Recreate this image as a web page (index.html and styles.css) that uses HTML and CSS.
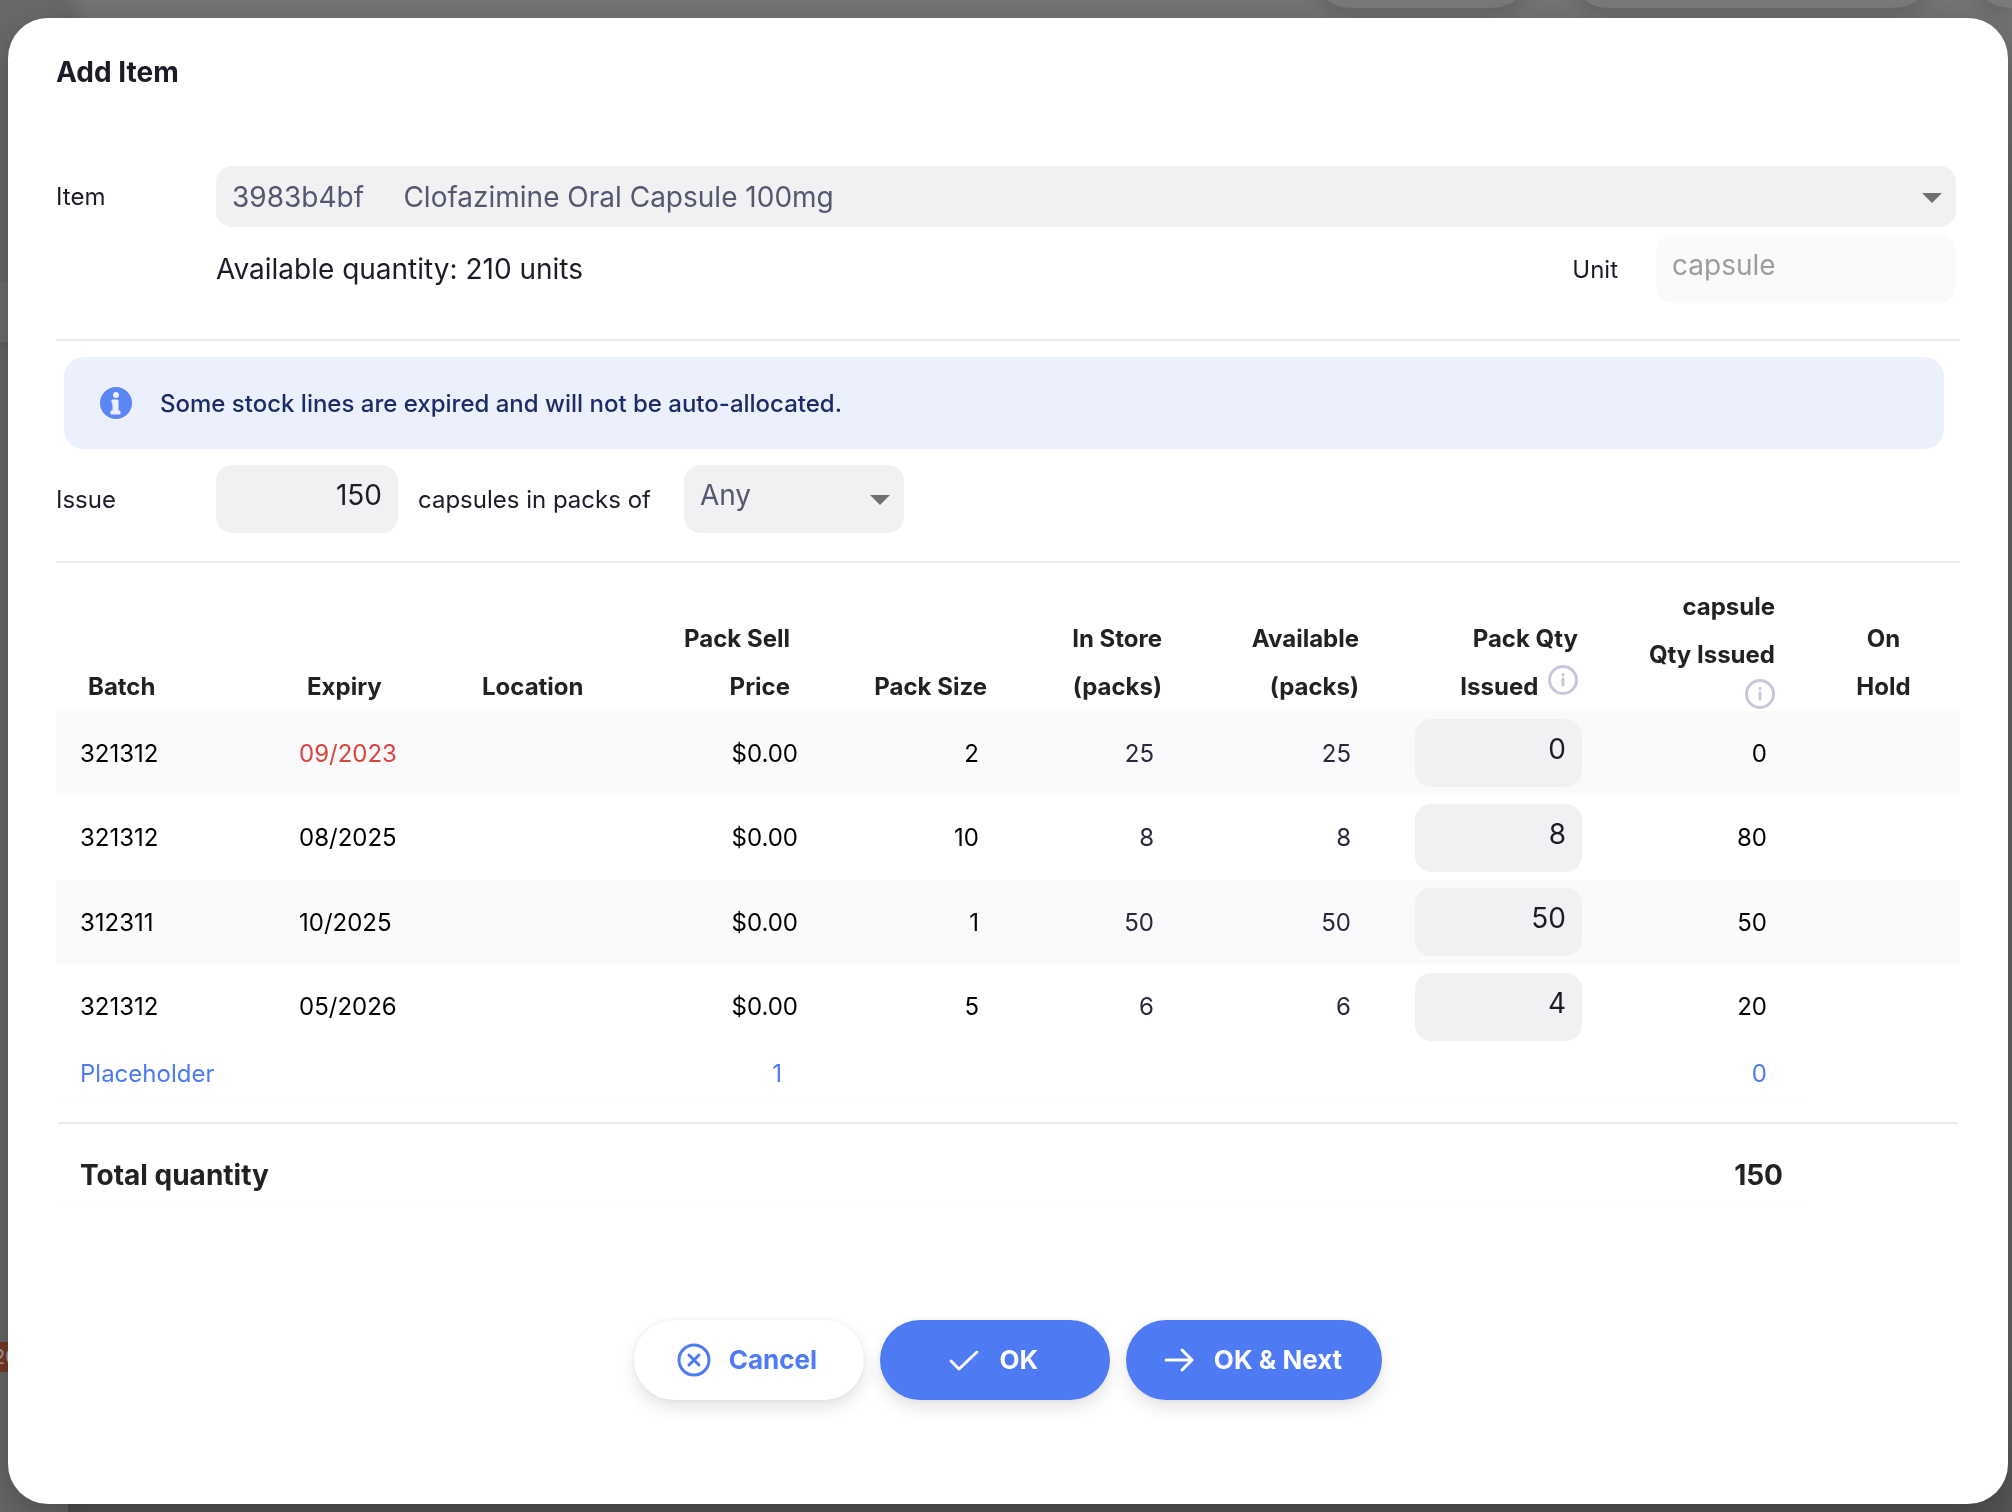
FILE: index.html
```
<!DOCTYPE html>
<html lang="en">
<head>
    <meta charset="UTF-8">
    <meta name="viewport" content="width=device-width, initial-scale=1.0">
    <title>Add Item</title>
    <link rel="stylesheet" href="styles.css">
</head>
<body>
    <!-- Dimmed page behind the dialog -->
    <div class="page" aria-hidden="true">
        <div class="page-sidebar">
            <div class="page-nav"></div>
            <div class="page-badge">20</div>
        </div>
        <div class="page-toolbar">
            <span class="page-pill"></span>
            <span class="page-pill wide"></span>
            <span class="page-pill last"></span>
        </div>
    </div>

    <div class="overlay">
        <form class="modal" role="dialog" aria-labelledby="modal-title">
            <h1 class="modal-title" id="modal-title">Add Item</h1>

            <div class="row">
                <label class="row-label" for="item">Item</label>
                <div class="select-wrap item-select">
                    <select id="item">
                        <option>3983b4bf&nbsp;&nbsp;&nbsp;&nbsp;&nbsp;Clofazimine Oral Capsule 100mg</option>
                    </select>
                    <svg class="caret" viewBox="0 0 20 10"><path d="M0 0h20L10 10z"/></svg>
                </div>
            </div>

            <div class="row unit-row">
                <p class="available">Available quantity: 210 units</p>
                <label class="unit-label" for="unit">Unit</label>
                <input class="field unit-input" type="text" id="unit" value="capsule" disabled>
            </div>

            <hr class="divider">

            <div class="alert" role="status">
                <svg class="alert-icon" viewBox="0 0 32 32">
                    <circle cx="16" cy="16" r="16" fill="#5b86f5"/>
                    <circle cx="16" cy="8" r="3" fill="#ecf0fd"/>
                    <path d="M12 13h6v11h2v3h-9v-3h2v-8h-1z" fill="#ecf0fd" stroke="#ecf0fd" stroke-linejoin="round"/>
                </svg>
                <span>Some stock lines are expired and will not be auto-allocated.</span>
            </div>

            <div class="row issue-row">
                <label class="row-label" for="issue">Issue</label>
                <input class="field number issue-input" type="text" inputmode="numeric" id="issue" value="150">
                <label class="packs-label" for="pack-size">capsules in packs of</label>
                <div class="select-wrap pack-select">
                    <select id="pack-size">
                        <option>Any</option>
                    </select>
                    <svg class="caret" viewBox="0 0 20 10"><path d="M0 0h20L10 10z"/></svg>
                </div>
            </div>

            <hr class="divider">

            <table class="stock-table">
                <colgroup>
                    <col class="col-batch">
                    <col class="col-expiry">
                    <col class="col-location">
                    <col class="col-price">
                    <col class="col-size">
                    <col class="col-store">
                    <col class="col-available">
                    <col class="col-qty">
                    <col class="col-issued">
                    <col class="col-hold">
                </colgroup>
                <thead>
                    <tr>
                        <th class="left">Batch</th>
                        <th class="left">Expiry</th>
                        <th class="left">Location</th>
                        <th class="price">Pack Sell<br>Price</th>
                        <th>Pack Size</th>
                        <th>In Store<br>(packs)</th>
                        <th>Available<br>(packs)</th>
                        <th>Pack Qty<br>Issued
                            <svg class="info" viewBox="0 0 30 30"><circle cx="15" cy="15" r="13.5"/><path d="M15 14v6M15 9.500v.5"/></svg>
                        </th>
                        <th class="issued">capsule<br>Qty Issued<br>
                            <svg class="info" viewBox="0 0 30 30"><circle cx="15" cy="15" r="13.5"/><path d="M15 14v6M15 9.500v.5"/></svg>
                        </th>
                        <th class="hold">On<br>Hold</th>
                    </tr>
                </thead>
                <tbody>
                    <tr>
                        <td class="left">321312</td>
                        <td class="left expired">09/2023</td>
                        <td></td>
                        <td class="price">$0.00</td>
                        <td>2</td>
                        <td class="soft">25</td>
                        <td class="soft">25</td>
                        <td class="qty"><input class="field number" type="text" inputmode="numeric" value="0" aria-label="Pack quantity issued, expiry 09/2023"></td>
                        <td class="issued">0</td>
                        <td></td>
                    </tr>
                    <tr>
                        <td class="left">321312</td>
                        <td class="left">08/2025</td>
                        <td></td>
                        <td class="price">$0.00</td>
                        <td>10</td>
                        <td class="soft">8</td>
                        <td class="soft">8</td>
                        <td class="qty"><input class="field number" type="text" inputmode="numeric" value="8" aria-label="Pack quantity issued, expiry 08/2025"></td>
                        <td class="issued">80</td>
                        <td></td>
                    </tr>
                    <tr>
                        <td class="left">312311</td>
                        <td class="left">10/2025</td>
                        <td></td>
                        <td class="price">$0.00</td>
                        <td>1</td>
                        <td class="soft">50</td>
                        <td class="soft">50</td>
                        <td class="qty"><input class="field number" type="text" inputmode="numeric" value="50" aria-label="Pack quantity issued, expiry 10/2025"></td>
                        <td class="issued">50</td>
                        <td></td>
                    </tr>
                    <tr>
                        <td class="left">321312</td>
                        <td class="left">05/2026</td>
                        <td></td>
                        <td class="price">$0.00</td>
                        <td>5</td>
                        <td class="soft">6</td>
                        <td class="soft">6</td>
                        <td class="qty"><input class="field number" type="text" inputmode="numeric" value="4" aria-label="Pack quantity issued, expiry 05/2026"></td>
                        <td class="issued">20</td>
                        <td></td>
                    </tr>
                </tbody>
                <tfoot>
                    <tr class="placeholder-row">
                        <td class="left" colspan="3">Placeholder</td>
                        <td class="placeholder-qty">1</td>
                        <td colspan="4"></td>
                        <td class="issued">0</td>
                    </tr>
                    <tr class="divider-row">
                        <td colspan="10"><hr class="divider"></td>
                    </tr>
                    <tr class="total-row">
                        <td class="left" colspan="3">Total quantity</td>
                        <td colspan="5"></td>
                        <td class="total">150</td>
                    </tr>
                </tfoot>
            </table>

            <div class="actions">
                <button type="button" class="btn btn-light">
                    <svg class="btn-icon" viewBox="0 0 34 34"><circle cx="17" cy="17" r="15"/><path d="M12 12l10 10M22 12L12 22"/></svg>
                    Cancel
                </button>
                <button type="button" class="btn">
                    <svg class="btn-icon" viewBox="0 0 34 34"><path d="M4 18l8 8L30 9"/></svg>
                    OK
                </button>
                <button type="button" class="btn">
                    <svg class="btn-icon" viewBox="0 0 34 34"><path d="M4 17h25M20 7l10 10-10 10"/></svg>
                    OK &amp; Next
                </button>
            </div>
        </form>
    </div>
</body>
</html>
```
FILE: styles.css
```
* {
    margin: 0;
    padding: 0;
    box-sizing: border-box;
}

body {
    font-family: Inter, "Liberation Sans", sans-serif;
    font-size: 24px;
    color: #1c1c28;
    background-color: #6a6a6a;
}

/* page behind */
.page {
    position: fixed;
    inset: 0;
    display: flex;
    background: linear-gradient(#767676, #666 20%, #666 90%, #585858);
    overflow: hidden;
}

.page-sidebar {
    width: 68px;
    background-color: #6a6a6a;
    box-shadow: 0 0 24px rgba(0, 0, 0, 0.25);
}

.page-nav {
    height: 60px;
    margin-top: 282px;
    background-color: #707070;
    box-shadow: 0 8px 16px rgba(0, 0, 0, 0.12);
}

.page-badge {
    height: 30px;
    margin-top: 1000px;
    background-color: #7a3a26;
    color: #a5a5a5;
    font-size: 20px;
    line-height: 30px;
    text-indent: -7px;
}

.page-toolbar {
    flex: 1;
    display: flex;
    justify-content: flex-end;
    gap: 36px;
}

.page-pill {
    width: 221px;
    height: 80px;
    margin-top: -72px;
    border-radius: 40px;
    background-color: #7b7b7b;
    box-shadow: 0 8px 16px rgba(0, 0, 0, 0.12);
}

.page-pill.wide {
    width: 366px;
}

.page-pill.last {
    width: 42px;
    border-radius: 40px 0 0 40px;
}

/* modal */
.overlay {
    position: relative;
    padding: 18px 4px 8px 8px;
}

.modal {
    min-height: calc(100vh - 26px);
    padding: 32px 48px 104px;
    background-color: #fff;
    border-radius: 40px;
    box-shadow: 0 16px 48px rgba(0, 0, 0, 0.3);
}

.modal-title {
    margin-bottom: 72px;
    font-size: 28px;
    line-height: 44px;
}

.row {
    display: flex;
    align-items: center;
    padding-right: 4px;
}

.row-label {
    width: 160px;
}

.unit-row {
    margin-top: 8px;
    margin-bottom: 36px;
    padding-left: 160px;
}

.available {
    flex: 1;
    font-size: 28px;
}

.unit-label {
    margin-right: 38px;
}

.divider {
    height: 2px;
    border: none;
    background-color: #eaeaea;
}

.field,
.select-wrap select {
    height: 68px;
    padding: 0 16px 8px;
    border: none;
    border-radius: 16px;
    background-color: #f1f1f4;
    color: #1c1c28;
    font-family: inherit;
    font-size: 28px;
}

.select-wrap {
    position: relative;
}

.select-wrap select {
    width: 100%;
    color: #555770;
    appearance: none;
}

.item-select {
    flex: 1;
}

.item-select select {
    height: 61px;
    padding-bottom: 0;
    display: block;
}

.caret {
    position: absolute;
    right: 14px;
    top: 50%;
    width: 20px;
    height: 10px;
    margin-top: -4px;
    fill: #707070;
    pointer-events: none;
}

.unit-input {
    width: 300px;
}

.unit-input:disabled {
    background-color: #fafafc;
    color: #9c9c9c;
}

.number {
    text-align: right;
}

.alert {
    display: flex;
    align-items: center;
    gap: 28px;
    height: 92px;
    margin: 16px 16px 16px 8px;
    padding: 0 36px;
    border-radius: 20px;
    background-color: #ecf0fd;
    color: #1b2d66;
    font-weight: 500;
}

.alert-icon {
    width: 32px;
    height: 32px;
}

.issue-row {
    margin-bottom: 28px;
}

.issue-input {
    width: 182px;
}

.packs-label {
    margin: 0 33px 0 20px;
}

.pack-select {
    width: 220px;
}

.pack-select select {
    display: block;
}

/* stock lines */
.stock-table {
    width: 100%;
    table-layout: fixed;
    border-collapse: collapse;
}

.col-batch { width: 219px; }
.col-expiry { width: 175px; }
.col-location { width: 170px; }
.col-price { width: 202px; }
.col-size { width: 189px; }
.col-store { width: 175px; }
.col-available { width: 197px; }
.col-qty { width: 219px; }
.col-issued { width: 205px; }
.col-hold { width: 153px; }

.stock-table th {
    padding: 20px 24px 0 0;
    color: #222;
    font-weight: 700;
    line-height: 48px;
    text-align: right;
    vertical-align: bottom;
    white-space: nowrap;
}

.stock-table th.left {
    padding-left: 32px;
    text-align: left;
}

.stock-table th.price,
.stock-table th.issued {
    padding-right: 32px;
}

.stock-table th.hold {
    padding-right: 0;
    text-align: center;
}

.info {
    width: 30px;
    height: 30px;
    margin-left: 4px;
    fill: none;
    stroke: #c7c9d9;
    stroke-width: 3;
    stroke-linecap: round;
}

th.issued .info {
    display: block;
    margin: 0 0 2px auto;
}

.stock-table td {
    padding: 0 32px 0 0;
    color: #000;
    text-align: right;
}

.stock-table tbody tr {
    height: 84px;
}

.stock-table tbody tr:nth-child(even) {
    height: 85px;
}

.stock-table tbody tr:nth-child(odd) {
    background-color: #fafafc;
}

.stock-table td.left {
    padding-left: 24px;
    text-align: left;
}

.stock-table td.price {
    padding-right: 24px;
}

.stock-table td.issued {
    padding-right: 40px;
}

.stock-table td.soft {
    color: #28293d;
}

.stock-table td.expired {
    color: #d9453d;
}

.stock-table td.qty {
    padding-right: 20px;
}

.qty .field {
    display: block;
    width: 167px;
    margin-left: auto;
}

.stock-table .placeholder-row td {
    height: 50px;
    border-bottom: 1px solid #fafafa;
    color: #4e7af3;
}

.stock-table .placeholder-row .placeholder-qty {
    padding-right: 40px;
}

.stock-table .divider-row td {
    height: 48px;
    padding: 0 2px;
}

.stock-table .total-row td {
    height: 56px;
    border-bottom: 1px solid #fafafa;
    color: #222;
    font-size: 28px;
    font-weight: 700;
}

.stock-table .total-row .total {
    padding-right: 24px;
}

/* buttons */
.actions {
    display: flex;
    justify-content: center;
    gap: 16px;
    margin-top: 116px;
}

.btn {
    display: flex;
    align-items: center;
    justify-content: center;
    gap: 18px;
    min-width: 230px;
    height: 80px;
    padding: 0 40px 0 36px;
    border: none;
    border-radius: 40px;
    background-color: #4e7af3;
    color: #fff;
    font-family: inherit;
    font-size: 26px;
    font-weight: 700;
    box-shadow: 0 8px 16px rgba(40, 41, 61, 0.12), 0 0 4px rgba(40, 41, 61, 0.06);
    cursor: pointer;
}

.btn-light {
    background-color: #fff;
    color: #4e7af3;
}

.btn-icon {
    width: 34px;
    height: 34px;
    fill: none;
    stroke: currentColor;
    stroke-width: 3;
    stroke-linecap: round;
    stroke-linejoin: round;
}
```
